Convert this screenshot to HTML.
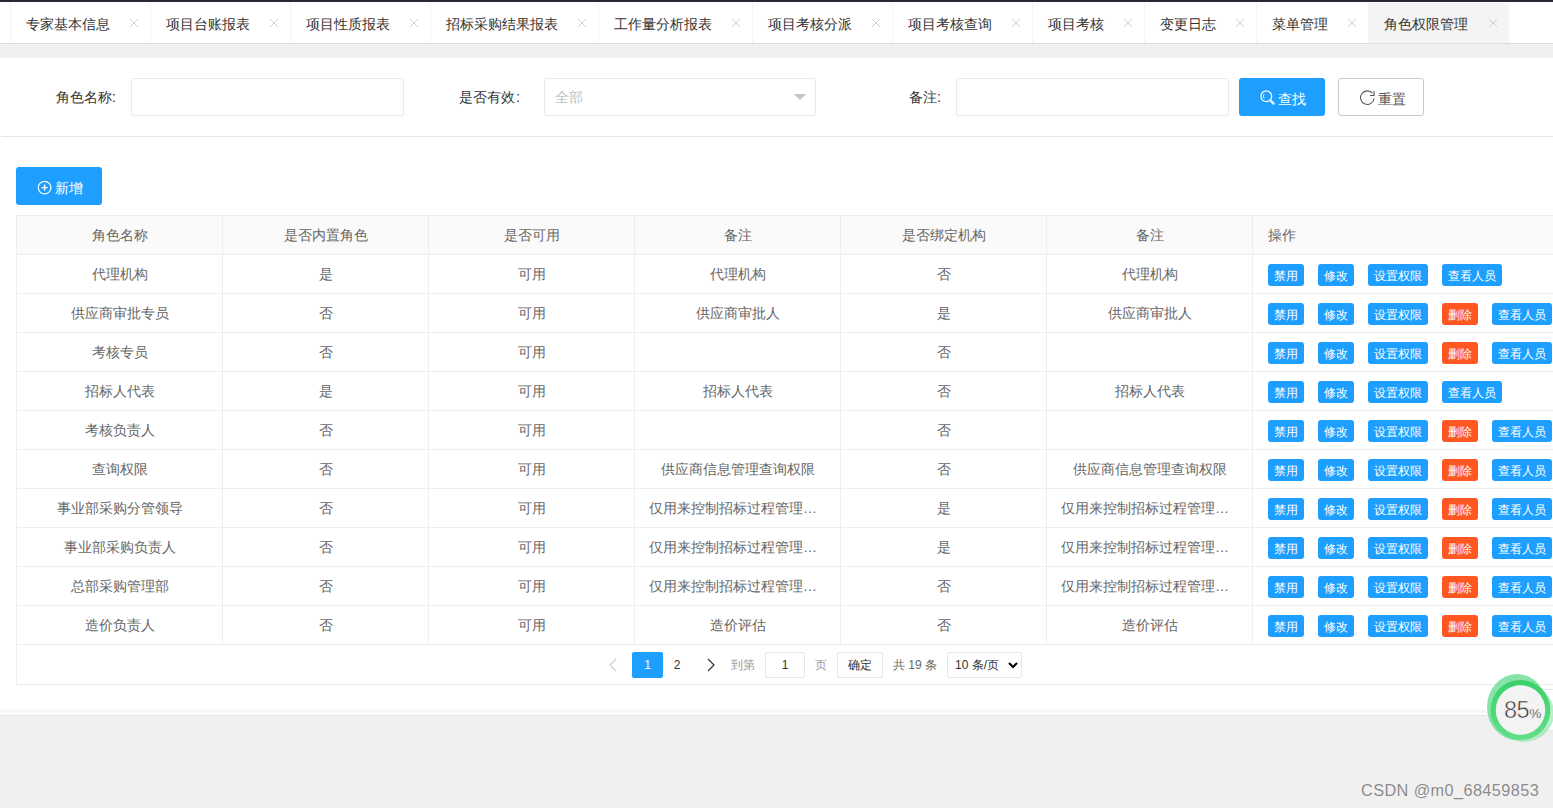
<!DOCTYPE html>
<html><head><meta charset="utf-8">
<style>
*{box-sizing:border-box;margin:0;padding:0}
html,body{width:1553px;height:808px;overflow:hidden}
body{position:relative;background:#f0f0f0;font-family:"Liberation Sans",sans-serif;font-size:14px;color:#333}
.abs{position:absolute}
#topbar{left:0;top:0;width:1553px;height:2px;background:#262932}
#tabs{left:0;top:2px;width:1553px;height:42px;background:#fff;border-bottom:1px solid #dcdcdc}
.tab{position:absolute;top:1px;height:40px;line-height:40px;border-left:1px solid #f4f4f4;color:#333;font-size:14px;white-space:nowrap}
.tab .t{position:absolute;left:15px;top:1px}
.tab .x{position:absolute;right:11px;top:15px}
.tab.on{background:#f4f4f4}
#panel{left:0;top:58px;width:1553px;height:653px;background:#fff;border-bottom:1px solid #f4f4f4}
#shadow{left:0;top:711px;width:1553px;height:4px;background:linear-gradient(#f8f8f8,#fff)}
#bline{left:0;top:715px;width:1553px;height:1px;background:#e6e6e6}
#sline{left:1px;top:136px;width:1552px;height:1px;background:#e6e6e6}
.lbl{position:absolute;top:78px;height:38px;line-height:38px;color:#333;white-space:nowrap}
.inp{position:absolute;top:78px;height:38px;border:1px solid #eaeaea;border-radius:2px;background:#fff}
.btn{position:absolute;height:38px;line-height:38px;border-radius:3px;background:#1e9fff;color:#fff;white-space:nowrap}
.c{position:absolute;width:206px;height:39px;line-height:40px;padding:0 15px;text-align:center;color:#666;white-space:nowrap;overflow:hidden;text-overflow:ellipsis}
.hl{height:1px;background:#eee}
.vl{width:1px;background:#eee}
.ob{position:absolute;height:22px;line-height:24px;font-weight:500;border-radius:3px;color:#fff;font-size:12px;text-align:center;white-space:nowrap}
.ob.b{background:#1e9fff}
.ob.r{background:#ff5722}
.pg{position:absolute;top:652px;height:26px;line-height:26px;font-size:12px;white-space:nowrap}
</style></head><body>
<div class="abs" id="topbar"></div>
<div class="abs" id="tabs"><div class="tab" style="left:10px;width:140px"><span class="t">专家基本信息</span><svg class="x" width="10" height="10" viewBox="0 0 10 10"><path d="M1 1L9 9M9 1L1 9" stroke="#cfcfcf" stroke-width="1" fill="none"/></svg></div><div class="tab" style="left:150px;width:140px"><span class="t">项目台账报表</span><svg class="x" width="10" height="10" viewBox="0 0 10 10"><path d="M1 1L9 9M9 1L1 9" stroke="#cfcfcf" stroke-width="1" fill="none"/></svg></div><div class="tab" style="left:290px;width:140px"><span class="t">项目性质报表</span><svg class="x" width="10" height="10" viewBox="0 0 10 10"><path d="M1 1L9 9M9 1L1 9" stroke="#cfcfcf" stroke-width="1" fill="none"/></svg></div><div class="tab" style="left:430px;width:168px"><span class="t">招标采购结果报表</span><svg class="x" width="10" height="10" viewBox="0 0 10 10"><path d="M1 1L9 9M9 1L1 9" stroke="#cfcfcf" stroke-width="1" fill="none"/></svg></div><div class="tab" style="left:598px;width:154px"><span class="t">工作量分析报表</span><svg class="x" width="10" height="10" viewBox="0 0 10 10"><path d="M1 1L9 9M9 1L1 9" stroke="#cfcfcf" stroke-width="1" fill="none"/></svg></div><div class="tab" style="left:752px;width:140px"><span class="t">项目考核分派</span><svg class="x" width="10" height="10" viewBox="0 0 10 10"><path d="M1 1L9 9M9 1L1 9" stroke="#cfcfcf" stroke-width="1" fill="none"/></svg></div><div class="tab" style="left:892px;width:140px"><span class="t">项目考核查询</span><svg class="x" width="10" height="10" viewBox="0 0 10 10"><path d="M1 1L9 9M9 1L1 9" stroke="#cfcfcf" stroke-width="1" fill="none"/></svg></div><div class="tab" style="left:1032px;width:112px"><span class="t">项目考核</span><svg class="x" width="10" height="10" viewBox="0 0 10 10"><path d="M1 1L9 9M9 1L1 9" stroke="#cfcfcf" stroke-width="1" fill="none"/></svg></div><div class="tab" style="left:1144px;width:112px"><span class="t">变更日志</span><svg class="x" width="10" height="10" viewBox="0 0 10 10"><path d="M1 1L9 9M9 1L1 9" stroke="#cfcfcf" stroke-width="1" fill="none"/></svg></div><div class="tab" style="left:1256px;width:112px"><span class="t">菜单管理</span><svg class="x" width="10" height="10" viewBox="0 0 10 10"><path d="M1 1L9 9M9 1L1 9" stroke="#cfcfcf" stroke-width="1" fill="none"/></svg></div><div class="tab on" style="left:1368px;width:141px"><span class="t">角色权限管理</span><svg class="x" width="10" height="10" viewBox="0 0 10 10"><path d="M1 1L9 9M9 1L1 9" stroke="#cfcfcf" stroke-width="1" fill="none"/></svg></div></div>
<div class="abs" id="panel"></div>
<div class="abs" id="shadow"></div>
<div class="abs" id="bline"></div>
<div class="abs" id="sline"></div>
<div class="lbl" style="left:56px">角色名称:</div>
<div class="inp" style="left:131px;width:273px"></div>
<div class="lbl" style="left:459px">是否有效<span style="margin-left:1px">:</span></div>
<div class="inp" style="left:544px;width:272px"><span style="position:absolute;left:10px;top:0;line-height:36px;color:#c2c2c2">全部</span><svg style="position:absolute;left:249px;top:15px" width="12" height="6" viewBox="0 0 12 6"><path d="M0 0H12L6 6Z" fill="#c2c2c2"/></svg></div>
<div class="lbl" style="left:909px">备注:</div>
<div class="inp" style="left:956px;width:273px"></div>
<div class="btn" style="left:1239px;top:78px;width:86px"><svg style="position:absolute;left:20px;top:11px" width="18" height="18" viewBox="0 0 18 18"><circle cx="7.3" cy="7.3" r="5.4" stroke="#fff" stroke-width="1.2" fill="none"/><path d="M11.3 11.3L14.6 14.6" stroke="#fff" stroke-width="2.3" stroke-linecap="round"/><path d="M11.3 11.3L14.6 14.6" stroke="#7cc6ff" stroke-width="0.6" stroke-linecap="round"/><path d="M5.2 5.2A3 3 0 0 0 5.2 9.4" stroke="#fff" stroke-width="0.9" fill="none"/></svg><span style="position:absolute;left:39px;top:1.5px;font-weight:500">查找</span></div>
<div class="btn" style="left:1338px;top:78px;width:86px;background:#fff;border:1px solid #c9c9c9;color:#555;line-height:36px"><svg style="position:absolute;left:21px;top:11.2px" width="16" height="16" viewBox="0 0 16 16"><path d="M14.1 8.2A6.8 6.8 0 1 1 12.6 3.4" stroke="#555" stroke-width="1.05" fill="none"/><path d="M14.1 1V5.4H9.9" stroke="#555" stroke-width="1.05" fill="none"/></svg><span style="position:absolute;left:39px;top:1.5px">重置</span></div>
<div class="btn" style="left:16px;top:167px;width:86px"><svg style="position:absolute;left:21px;top:13px" width="15" height="15" viewBox="0 0 15 15"><circle cx="7.6" cy="7.6" r="6.3" stroke="#fff" stroke-width="1.2" fill="none"/><path d="M7.6 4.6V10.6M4.6 7.6H10.6" stroke="#fff" stroke-width="1.3"/></svg><span style="position:absolute;left:39px;top:1.5px;font-weight:500">新增</span></div>
<div class="abs" style="left:17px;top:216px;width:1536px;height:38px;background:#fafafa"></div><div class="c h" style="left:16px;top:215px;padding-left:16px;padding-right:14px;">角色名称</div><div class="c h" style="left:222px;top:215px;padding-left:16px;padding-right:14px;">是否内置角色</div><div class="c h" style="left:428px;top:215px;padding-left:16px;padding-right:14px;">是否可用</div><div class="c h" style="left:634px;top:215px;padding-left:16px;padding-right:14px;">备注</div><div class="c h" style="left:840px;top:215px;padding-left:16px;padding-right:14px;">是否绑定机构</div><div class="c h" style="left:1046px;top:215px;padding-left:16px;padding-right:14px;">备注</div><div class="c h" style="left:1252px;top:215px;width:301px;text-align:left;padding-left:16px">操作</div><div class="c" style="left:16px;top:254px;padding-left:16px;padding-right:14px;">代理机构</div><div class="c" style="left:222px;top:254px;padding-left:16px;padding-right:14px;">是</div><div class="c" style="left:428px;top:254px;padding-left:16px;padding-right:14px;">可用</div><div class="c" style="left:634px;top:254px;padding-left:16px;padding-right:14px;">代理机构</div><div class="c" style="left:840px;top:254px;padding-left:16px;padding-right:14px;">否</div><div class="c" style="left:1046px;top:254px;padding-left:16px;padding-right:14px;">代理机构</div><div class="ob b" style="left:1268px;top:264px;width:36px">禁用</div><div class="ob b" style="left:1318px;top:264px;width:36px">修改</div><div class="ob b" style="left:1368px;top:264px;width:60px">设置权限</div><div class="ob b" style="left:1442px;top:264px;width:60px">查看人员</div><div class="c" style="left:16px;top:293px;padding-left:16px;padding-right:14px;">供应商审批专员</div><div class="c" style="left:222px;top:293px;padding-left:16px;padding-right:14px;">否</div><div class="c" style="left:428px;top:293px;padding-left:16px;padding-right:14px;">可用</div><div class="c" style="left:634px;top:293px;padding-left:16px;padding-right:14px;">供应商审批人</div><div class="c" style="left:840px;top:293px;padding-left:16px;padding-right:14px;">是</div><div class="c" style="left:1046px;top:293px;padding-left:16px;padding-right:14px;">供应商审批人</div><div class="ob b" style="left:1268px;top:303px;width:36px">禁用</div><div class="ob b" style="left:1318px;top:303px;width:36px">修改</div><div class="ob b" style="left:1368px;top:303px;width:60px">设置权限</div><div class="ob r" style="left:1442px;top:303px;width:36px">删除</div><div class="ob b" style="left:1492px;top:303px;width:60px">查看人员</div><div class="c" style="left:16px;top:332px;padding-left:16px;padding-right:14px;">考核专员</div><div class="c" style="left:222px;top:332px;padding-left:16px;padding-right:14px;">否</div><div class="c" style="left:428px;top:332px;padding-left:16px;padding-right:14px;">可用</div><div class="c" style="left:634px;top:332px;padding-left:16px;padding-right:14px;"></div><div class="c" style="left:840px;top:332px;padding-left:16px;padding-right:14px;">否</div><div class="c" style="left:1046px;top:332px;padding-left:16px;padding-right:14px;"></div><div class="ob b" style="left:1268px;top:342px;width:36px">禁用</div><div class="ob b" style="left:1318px;top:342px;width:36px">修改</div><div class="ob b" style="left:1368px;top:342px;width:60px">设置权限</div><div class="ob r" style="left:1442px;top:342px;width:36px">删除</div><div class="ob b" style="left:1492px;top:342px;width:60px">查看人员</div><div class="c" style="left:16px;top:371px;padding-left:16px;padding-right:14px;">招标人代表</div><div class="c" style="left:222px;top:371px;padding-left:16px;padding-right:14px;">是</div><div class="c" style="left:428px;top:371px;padding-left:16px;padding-right:14px;">可用</div><div class="c" style="left:634px;top:371px;padding-left:16px;padding-right:14px;">招标人代表</div><div class="c" style="left:840px;top:371px;padding-left:16px;padding-right:14px;">否</div><div class="c" style="left:1046px;top:371px;padding-left:16px;padding-right:14px;">招标人代表</div><div class="ob b" style="left:1268px;top:381px;width:36px">禁用</div><div class="ob b" style="left:1318px;top:381px;width:36px">修改</div><div class="ob b" style="left:1368px;top:381px;width:60px">设置权限</div><div class="ob b" style="left:1442px;top:381px;width:60px">查看人员</div><div class="c" style="left:16px;top:410px;padding-left:16px;padding-right:14px;">考核负责人</div><div class="c" style="left:222px;top:410px;padding-left:16px;padding-right:14px;">否</div><div class="c" style="left:428px;top:410px;padding-left:16px;padding-right:14px;">可用</div><div class="c" style="left:634px;top:410px;padding-left:16px;padding-right:14px;"></div><div class="c" style="left:840px;top:410px;padding-left:16px;padding-right:14px;">否</div><div class="c" style="left:1046px;top:410px;padding-left:16px;padding-right:14px;"></div><div class="ob b" style="left:1268px;top:420px;width:36px">禁用</div><div class="ob b" style="left:1318px;top:420px;width:36px">修改</div><div class="ob b" style="left:1368px;top:420px;width:60px">设置权限</div><div class="ob r" style="left:1442px;top:420px;width:36px">删除</div><div class="ob b" style="left:1492px;top:420px;width:60px">查看人员</div><div class="c" style="left:16px;top:449px;padding-left:16px;padding-right:14px;">查询权限</div><div class="c" style="left:222px;top:449px;padding-left:16px;padding-right:14px;">否</div><div class="c" style="left:428px;top:449px;padding-left:16px;padding-right:14px;">可用</div><div class="c" style="left:634px;top:449px;padding-left:16px;padding-right:14px;">供应商信息管理查询权限</div><div class="c" style="left:840px;top:449px;padding-left:16px;padding-right:14px;">否</div><div class="c" style="left:1046px;top:449px;padding-left:16px;padding-right:14px;">供应商信息管理查询权限</div><div class="ob b" style="left:1268px;top:459px;width:36px">禁用</div><div class="ob b" style="left:1318px;top:459px;width:36px">修改</div><div class="ob b" style="left:1368px;top:459px;width:60px">设置权限</div><div class="ob r" style="left:1442px;top:459px;width:36px">删除</div><div class="ob b" style="left:1492px;top:459px;width:60px">查看人员</div><div class="c" style="left:16px;top:488px;padding-left:16px;padding-right:14px;">事业部采购分管领导</div><div class="c" style="left:222px;top:488px;padding-left:16px;padding-right:14px;">否</div><div class="c" style="left:428px;top:488px;padding-left:16px;padding-right:14px;">可用</div><div class="c" style="left:634px;top:488px;">仅用来控制招标过程管理的权限</div><div class="c" style="left:840px;top:488px;padding-left:16px;padding-right:14px;">是</div><div class="c" style="left:1046px;top:488px;">仅用来控制招标过程管理的权限</div><div class="ob b" style="left:1268px;top:498px;width:36px">禁用</div><div class="ob b" style="left:1318px;top:498px;width:36px">修改</div><div class="ob b" style="left:1368px;top:498px;width:60px">设置权限</div><div class="ob r" style="left:1442px;top:498px;width:36px">删除</div><div class="ob b" style="left:1492px;top:498px;width:60px">查看人员</div><div class="c" style="left:16px;top:527px;padding-left:16px;padding-right:14px;">事业部采购负责人</div><div class="c" style="left:222px;top:527px;padding-left:16px;padding-right:14px;">否</div><div class="c" style="left:428px;top:527px;padding-left:16px;padding-right:14px;">可用</div><div class="c" style="left:634px;top:527px;">仅用来控制招标过程管理的权限</div><div class="c" style="left:840px;top:527px;padding-left:16px;padding-right:14px;">是</div><div class="c" style="left:1046px;top:527px;">仅用来控制招标过程管理的权限</div><div class="ob b" style="left:1268px;top:537px;width:36px">禁用</div><div class="ob b" style="left:1318px;top:537px;width:36px">修改</div><div class="ob b" style="left:1368px;top:537px;width:60px">设置权限</div><div class="ob r" style="left:1442px;top:537px;width:36px">删除</div><div class="ob b" style="left:1492px;top:537px;width:60px">查看人员</div><div class="c" style="left:16px;top:566px;padding-left:16px;padding-right:14px;">总部采购管理部</div><div class="c" style="left:222px;top:566px;padding-left:16px;padding-right:14px;">否</div><div class="c" style="left:428px;top:566px;padding-left:16px;padding-right:14px;">可用</div><div class="c" style="left:634px;top:566px;">仅用来控制招标过程管理的权限</div><div class="c" style="left:840px;top:566px;padding-left:16px;padding-right:14px;">否</div><div class="c" style="left:1046px;top:566px;">仅用来控制招标过程管理的权限</div><div class="ob b" style="left:1268px;top:576px;width:36px">禁用</div><div class="ob b" style="left:1318px;top:576px;width:36px">修改</div><div class="ob b" style="left:1368px;top:576px;width:60px">设置权限</div><div class="ob r" style="left:1442px;top:576px;width:36px">删除</div><div class="ob b" style="left:1492px;top:576px;width:60px">查看人员</div><div class="c" style="left:16px;top:605px;padding-left:16px;padding-right:14px;">造价负责人</div><div class="c" style="left:222px;top:605px;padding-left:16px;padding-right:14px;">否</div><div class="c" style="left:428px;top:605px;padding-left:16px;padding-right:14px;">可用</div><div class="c" style="left:634px;top:605px;padding-left:16px;padding-right:14px;">造价评估</div><div class="c" style="left:840px;top:605px;padding-left:16px;padding-right:14px;">否</div><div class="c" style="left:1046px;top:605px;padding-left:16px;padding-right:14px;">造价评估</div><div class="ob b" style="left:1268px;top:615px;width:36px">禁用</div><div class="ob b" style="left:1318px;top:615px;width:36px">修改</div><div class="ob b" style="left:1368px;top:615px;width:60px">设置权限</div><div class="ob r" style="left:1442px;top:615px;width:36px">删除</div><div class="ob b" style="left:1492px;top:615px;width:60px">查看人员</div>
<div class="abs hl" style="left:16px;top:215px;width:1537px"></div><div class="abs hl" style="left:16px;top:254px;width:1537px"></div><div class="abs hl" style="left:16px;top:293px;width:1537px"></div><div class="abs hl" style="left:16px;top:332px;width:1537px"></div><div class="abs hl" style="left:16px;top:371px;width:1537px"></div><div class="abs hl" style="left:16px;top:410px;width:1537px"></div><div class="abs hl" style="left:16px;top:449px;width:1537px"></div><div class="abs hl" style="left:16px;top:488px;width:1537px"></div><div class="abs hl" style="left:16px;top:527px;width:1537px"></div><div class="abs hl" style="left:16px;top:566px;width:1537px"></div><div class="abs hl" style="left:16px;top:605px;width:1537px"></div><div class="abs hl" style="left:16px;top:644px;width:1537px"></div><div class="abs hl" style="left:16px;top:684px;width:1537px"></div><div class="abs vl" style="left:16px;top:215px;height:429px"></div><div class="abs vl" style="left:222px;top:215px;height:429px"></div><div class="abs vl" style="left:428px;top:215px;height:429px"></div><div class="abs vl" style="left:634px;top:215px;height:429px"></div><div class="abs vl" style="left:840px;top:215px;height:429px"></div><div class="abs vl" style="left:1046px;top:215px;height:429px"></div><div class="abs vl" style="left:1252px;top:215px;height:429px"></div><div class="abs vl" style="left:16px;top:644px;height:41px"></div>
<div class="pg" style="left:606px;width:14px"><svg style="position:absolute;left:3px;top:6px" width="8" height="14" viewBox="0 0 8 14"><path d="M7 1L1 7L7 13" stroke="#ccc" stroke-width="1.2" fill="none"/></svg></div>
<div class="pg" style="left:632px;width:31px;background:#1e9fff;color:#fff;text-align:center;border-radius:2px">1</div>
<div class="pg" style="left:665px;width:24px;color:#333;text-align:center">2</div>
<div class="pg" style="left:704px;width:14px"><svg style="position:absolute;left:3px;top:6px" width="8" height="14" viewBox="0 0 8 14"><path d="M1 1L7 7L1 13" stroke="#333" stroke-width="1.2" fill="none"/></svg></div>
<div class="pg" style="left:731px;color:#999">到第</div>
<div class="pg" style="left:765px;width:40px;border:1px solid #e6e6e6;border-radius:2px;text-align:center;line-height:24px;color:#333">1</div>
<div class="pg" style="left:815px;color:#999">页</div>
<div class="pg" style="left:837px;width:46px;border:1px solid #e6e6e6;border-radius:2px;text-align:center;line-height:24px;color:#333">确定</div>
<div class="pg" style="left:893px;color:#666">共 19 条</div>
<div class="pg" style="left:947px;width:75px;border:1px solid #e6e6e6;border-radius:2px;line-height:24px;color:#333;padding-left:7px">10 条/页<svg style="position:absolute;left:60px;top:9px" width="10" height="7" viewBox="0 0 10 7"><path d="M1 1L5 5L9 1" stroke="#000" stroke-width="2" fill="none"/></svg></div>
<div class="abs" style="left:1530px;top:689px;width:30px;height:42px;background:#fff;border:1px solid #e6e6e6"></div>
<div class="abs" style="left:1480px;top:665px;width:80px;height:85px">
<svg width="80" height="85" viewBox="0 0 80 85" style="position:absolute;left:0;top:0"><defs><linearGradient id="g1" x1="0" y1="0" x2="0" y2="1"><stop offset="0" stop-color="#3bd26a"/><stop offset="1" stop-color="#62dd88"/></linearGradient></defs><ellipse cx="37" cy="42" rx="30" ry="33" fill="#5fd98a" opacity="0.75"/><ellipse cx="44" cy="48" rx="30" ry="29" fill="#86e6a6" opacity="0.6"/><circle cx="40.5" cy="45" r="27.3" fill="none" stroke="url(#g1)" stroke-width="5.2"/><circle cx="40.5" cy="45" r="24.7" fill="#f3f3f3"/></svg>
<span style="position:absolute;left:24px;top:32px;font-size:23.5px;line-height:26px;color:#333;letter-spacing:-0.5px;-webkit-text-stroke:0.55px #f3f3f3">85<span style="font-size:13.5px;letter-spacing:0;-webkit-text-stroke:0.25px #f3f3f3">%</span></span>
</div>
<div class="abs" style="left:1361px;top:781px;font-size:16.3px;line-height:19px;letter-spacing:0.4px;color:#8a8a8a;white-space:nowrap;text-shadow:0 0 1px #fff">CSDN @m0_68459853</div>
</body></html>
